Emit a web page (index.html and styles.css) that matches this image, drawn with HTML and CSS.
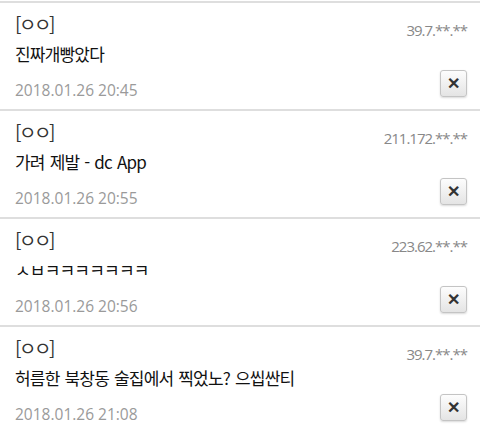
FILE: index.html
```html
<!DOCTYPE html>
<html lang="ko">
<head>
  <meta charset="UTF-8">
  <meta name="viewport" content="width=device-width, initial-scale=1">
  <title>댓글</title>
  <link rel="stylesheet" href="styles.css">
</head>
<body>
  <ul class="comments">
    <li class="comment">
      <div class="main">
        <div class="name">[ㅇㅇ]</div>
        <div class="text">진짜개빵았다</div>
        <div class="date">2018.01.26 20:45</div>
      </div>
      <div class="side">
        <span class="ip">39.7.**.**</span>
        <button class="del">&#10005;</button>
      </div>
    </li>
    <li class="comment">
      <div class="main">
        <div class="name">[ㅇㅇ]</div>
        <div class="text">가려 제발 - dc App</div>
        <div class="date">2018.01.26 20:55</div>
      </div>
      <div class="side">
        <span class="ip">211.172.**.**</span>
        <button class="del">&#10005;</button>
      </div>
    </li>
    <li class="comment">
      <div class="main">
        <div class="name">[ㅇㅇ]</div>
        <div class="text">ㅅㅂㅋㅋㅋㅋㅋㅋㅋ</div>
        <div class="date">2018.01.26 20:56</div>
      </div>
      <div class="side">
        <span class="ip">223.62.**.**</span>
        <button class="del">&#10005;</button>
      </div>
    </li>
    <li class="comment">
      <div class="main">
        <div class="name">[ㅇㅇ]</div>
        <div class="text">허름한 북창동 술집에서 찍었노? 으씹싼티</div>
        <div class="date">2018.01.26 21:08</div>
      </div>
      <div class="side">
        <span class="ip">39.7.**.**</span>
        <button class="del">&#10005;</button>
      </div>
    </li>
  </ul>
</body>
</html>
```

FILE: styles.css
```css
body {
  margin: 0;
  padding-top: 1px;
  background: #fff;
  font-family: "Noto Sans CJK KR", "Noto Sans", sans-serif;
  color: #111;
}
.comments {
  list-style: none;
  margin: 0;
  padding: 0;
}
.comment {
  display: flex;
  justify-content: space-between;
  height: 106px;
  border-top: 2px solid #dedede;
  padding: 0 13px 0 15px;
}
.main {
  display: flex;
  flex-direction: column;
}
.name {
  font-size: 19px;
  line-height: 24px;
  margin-top: 9px;
  color: #333;
  letter-spacing: -2.5px;
}
.text {
  font-size: 17px;
  line-height: 24px;
  margin-top: 6px;
  letter-spacing: -0.8px;
  word-spacing: 1px;
}
.date {
  font-family: "Open Sans", sans-serif;
  font-size: 15.5px;
  line-height: 20px;
  margin-top: 14px;
  color: #9a9a9a;
}
.side {
  display: flex;
  flex-direction: column;
  align-items: flex-end;
}
.ip {
  font-family: "Open Sans", sans-serif;
  font-size: 15px;
  line-height: 18px;
  margin-top: 18px;
  color: #888;
  letter-spacing: -1px;
}
.del {
  margin-top: 31px;
  width: 27px;
  height: 27px;
  padding: 0;
  border: 1px solid #c4c4c4;
  border-radius: 3px;
  background: linear-gradient(#fdfdfd, #e4e4e4);
  box-shadow: 0 1px 2px rgba(0, 0, 0, 0.15);
  color: #333;
  font-size: 16px;
  font-weight: bold;
  line-height: 25px;
}
```
